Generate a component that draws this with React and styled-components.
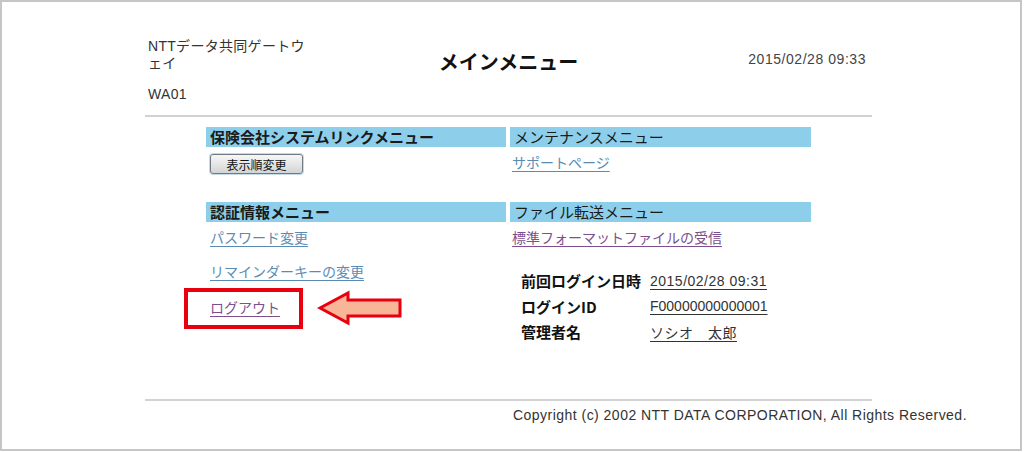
import React from 'react';
import styled, { createGlobalStyle } from 'styled-components';

const GlobalStyle = createGlobalStyle`
    body {
        margin: 0;
        background: #ffffff;
        font-family: "Liberation Sans", "Noto Sans CJK JP", sans-serif;
        color: #333333;
    }
`

const Frame = styled.div`
    box-sizing: border-box;
    width: 1022px;
    height: 451px;
    border: 2px solid #c6c6c6;
    padding: 36px 0 0 143px;
    background: #ffffff;
`

const Column = styled.div`
    width: 727px;
`

const Header = styled.div`
    display: grid;
    grid-template-columns: 168px 1fr 168px;
    align-items: start;
`

const SiteName = styled.div`
    padding-left: 3px;
    font-size: 14px;
    line-height: 17px;
    color: #333;
    letter-spacing: 0.3px;
`

const ScreenId = styled.div`
    margin-top: 14px;
`

const Title = styled.h1`
    margin: 13px 0 0 0;
    text-align: center;
    font-size: 20px;
    line-height: 24px;
    font-weight: bold;
    color: #111;
`

const Clock = styled.div`
    margin-top: 13px;
    padding-right: 6px;
    text-align: right;
    font-size: 14px;
    line-height: 17px;
    letter-spacing: 0.55px;
    color: #444;
`

const Rule = styled.div`
    height: 2px;
    background: #d2d2d2;
    margin-top: ${p => p.$top}px;
`

const MenuGrid = styled.div`
    display: grid;
    grid-template-columns: 300px 301px;
    column-gap: 4px;
    width: 605px;
    margin: 10px auto 0 auto;
`

const Section = styled.div`
    min-height: ${p => p.$height || 0}px;
`

const Bar = styled.div`
    height: 20px;
    line-height: 20px;
    padding-left: 4px;
    background: #8dcfea;
    font-family: "Noto Sans CJK JP", sans-serif;
    font-size: 15px;
    font-weight: ${p => (p.$bold ? 'bold' : 'normal')};
    color: #1a1a1a;
`

const Body = styled.div`
    padding: ${p => p.$pad || '7px 0 0 4px'};
`

const SortButton = styled.button`
    width: 93px;
    height: 20px;
    padding: 0;
    border: 1px solid #6f7a84;
    border-radius: 3px;
    box-shadow: 0 0 0 1px #c5dbe8;
    background: linear-gradient(#f7f7f7, #e6e6e6 50%, #d4d4d4);
    font-family: "Noto Sans CJK JP", sans-serif;
    font-size: 12px;
    color: #111;
`

const LinkList = styled.div`
    display: flex;
    flex-direction: column;
    align-items: flex-start;
    gap: ${p => p.$gap || 14}px;
`

const MenuLink = styled.a`
    position: relative;
    font-family: "Noto Sans CJK JP", sans-serif;
    font-size: 14px;
    line-height: 20px;
    color: ${p => (p.$visited ? '#7d4f8e' : '#5a8cb3')};
    text-decoration: underline;
    text-underline-offset: 3px;
    cursor: pointer;
`

const Highlight = styled.span`
    position: absolute;
    left: -26px;
    top: -9px;
    width: 119px;
    height: 41px;
    box-sizing: border-box;
    border: 4px solid #e8000f;
`

const Pointer = styled.svg`
    position: absolute;
    left: 107px;
    top: -7px;
`

const InfoTable = styled.div`
    display: grid;
    grid-template-columns: 129px auto;
    grid-auto-rows: 25.5px;
    align-items: center;
    margin: 21px 0 0 9px;
`

const Label = styled.div`
    font-family: "Noto Sans CJK JP", sans-serif;
    font-size: 15px;
    font-weight: bold;
    color: #111;
`

const Value = styled.div`
    justify-self: start;
    font-size: 14px;
    letter-spacing: ${p => p.$spacing ?? 0.5}px;
    color: #333;
    text-decoration: underline;
    text-underline-offset: 3px;
`

const Copyright = styled.div`
    width: 822px;
    margin-top: 6px;
    text-align: right;
    font-size: 14px;
    line-height: 17px;
    color: #333;
    letter-spacing: 0.47px;
`

const Arrow = () => (
    <Pointer width="86" height="36" viewBox="0 0 86 36">
        <polygon
            points="3,18 31,3 31,10 83,10 83,26 31,26 31,33"
            fill="#f8b597"
            stroke="#e8000f"
            strokeWidth="3"
        />
    </Pointer>
)

const App = () => {
    return (
        <Frame>
            <GlobalStyle />
            <Column>
                <Header>
                    <SiteName>
                        NTTデータ共同ゲートウェイ
                        <ScreenId>WA01</ScreenId>
                    </SiteName>
                    <Title>メインメニュー</Title>
                    <Clock>2015/02/28 09:33</Clock>
                </Header>

                <Rule $top={12} />

                <MenuGrid>
                    <Section $height={75}>
                        <Bar $bold>保険会社システムリンクメニュー</Bar>
                        <Body>
                            <SortButton>表示順変更</SortButton>
                        </Body>
                    </Section>
                    <Section $height={75}>
                        <Bar>メンテナンスメニュー</Bar>
                        <Body $pad="5px 0 0 2px">
                            <MenuLink>サポートページ</MenuLink>
                        </Body>
                    </Section>

                    <Section>
                        <Bar $bold>認証情報メニュー</Bar>
                        <Body $pad="5px 0 0 4px">
                            <LinkList $gap={14}>
                                <MenuLink>パスワード変更</MenuLink>
                                <MenuLink>リマインダーキーの変更</MenuLink>
                                <MenuLink $visited style={{ marginTop: 2 }}>
                                    ログアウト
                                    <Highlight />
                                    <Arrow />
                                </MenuLink>
                            </LinkList>
                        </Body>
                    </Section>
                    <Section>
                        <Bar>ファイル転送メニュー</Bar>
                        <Body $pad="5px 0 0 2px">
                            <MenuLink $visited>標準フォーマットファイルの受信</MenuLink>
                            <InfoTable>
                                <Label>前回ログイン日時</Label>
                                <Value>2015/02/28 09:31</Value>
                                <Label>ログインID</Label>
                                <Value $spacing={0}>F00000000000001</Value>
                                <Label>管理者名</Label>
                                <Value>ソシオ　太郎</Value>
                            </InfoTable>
                        </Body>
                    </Section>
                </MenuGrid>

                <Rule $top={54} />
            </Column>
            <Copyright>Copyright (c) 2002 NTT DATA CORPORATION, All Rights Reserved.</Copyright>
        </Frame>
    );
}

export default App;
